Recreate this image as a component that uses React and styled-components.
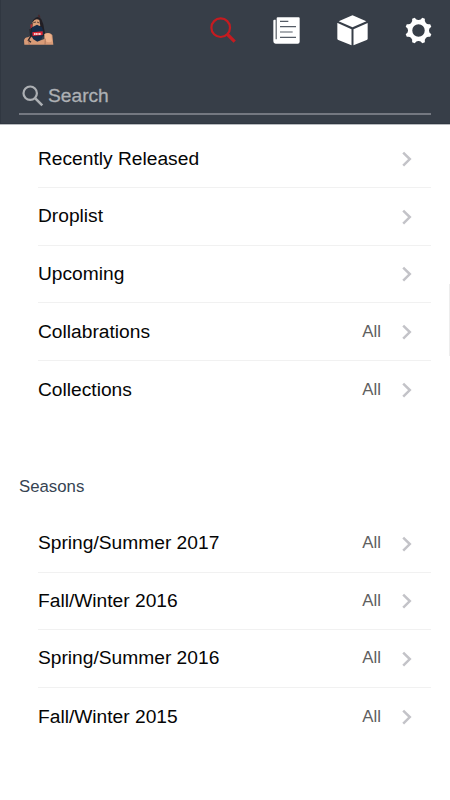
import React from 'react';
import styled, { createGlobalStyle } from 'styled-components';

const browseItems = [
  { label: 'Recently Released' },
  { label: 'Droplist' },
  { label: 'Upcoming' },
  { label: 'Collabrations', note: 'All' },
  { label: 'Collections', note: 'All' },
];

const seasonItems = [
  { label: 'Spring/Summer 2017', note: 'All' },
  { label: 'Fall/Winter 2016', note: 'All' },
  { label: 'Spring/Summer 2016', note: 'All' },
  { label: 'Fall/Winter 2015', note: 'All' },
];

// eight narrow teeth with scooped valleys between them
const gearPath = () => {
  const point = (deg, r) => {
    const a = (deg * Math.PI) / 180;
    return `${(40 + r * Math.cos(a)).toFixed(2)} ${(40 + r * Math.sin(a)).toFixed(2)}`;
  };
  let d = `M${point(17, 39.5)}`;
  for (let i = 0; i < 8; i++) {
    const mid = 22.5 + i * 45;
    d += `L${point(mid + 6, 39.5)}Q${point(mid + 11, 31)} ${point(mid + 22.5, 31)}`;
    d += `Q${point(mid + 34, 31)} ${point(mid + 39, 39.5)}`;
  }
  return `${d}ZM58.5 40A18.5 18.5 0 1 0 21.5 40A18.5 18.5 0 1 0 58.5 40Z`;
};

const Logo = () => (
  <svg width="32" height="34" viewBox="40 22 96 102">
    <path d="M71 42Q84 27 95 41Q102 54 104 72L108 92L65 92L64 62Z" fill="#211e24" />
    <path d="M84 32L88 26L93 36Z" fill="#4a2528" />
    <path d="M44 117L43 104Q46 94 55 95L61 92L72 98L86 107L104 100L105 84Q120 78 128 88L131 117Z" fill="#d99b77" />
    <path d="M104 86Q118 78 125 88L127 107Q117 113 107 105Z" fill="#edb18b" />
    <path d="M69 50Q76 37 89 43L92 60L68 66Z" fill="#dc9f78" />
    <path d="M71 51L79 49M82 49L89 52" stroke="#392a2b" strokeWidth="2.4" fill="none" />
    <path d="M62 57L68 54L68 66L63 68Z" fill="#a92f36" />
    <path d="M67 65L82 57L97 65L103 84L95 101L83 108L70 100L65 84Z" fill="#152b48" />
    <path d="M68 80L99 77L99 88L69 91Z" fill="#df2734" />
    <path d="M73 85H94" stroke="#fff" strokeWidth="4" strokeDasharray="4 1" fill="none" />
    <path d="M61 70L63 92L56 104L64 110" stroke="#292329" strokeWidth="4" fill="none" />
    <path d="M56 104L59 117M107 99L106 117" stroke="#966350" strokeWidth="2" fill="none" />
  </svg>
);

const SearchTabIcon = () => (
  <svg width="26" height="26" viewBox="0 0 26 26" fill="none" stroke="#c51b20">
    <circle cx="10.7" cy="10.7" r="9.3" strokeWidth="2.2" />
    <path d="M17.5 17.5L24.7 24.6" strokeWidth="3.2" />
  </svg>
);

const NewsIcon = () => (
  <svg width="27" height="27" viewBox="220 36 81 81">
    <path d="M234 37H297Q300 37 300 40V110Q300 116 294 116H228Q221 116 221 109V47Q221 44 224 44H228V103H231V40Q231 37 234 37Z" fill="#fff" />
    <path d="M241 49H266M241 65H289M241 81H279M241 97H289" stroke="#555c66" strokeWidth="3.6" />
  </svg>
);

const CubeIcon = () => (
  <svg width="31" height="31" viewBox="36 30 93 93" fill="#fff">
    <path d="M82.5 31L124 49L82.5 67L41 49Z" />
    <path d="M38 54L79.5 73V121L40 105Q37 104 37 101V54Z" />
    <path d="M128 54L85.5 73V121L125 105Q128 104 128 101Z" />
  </svg>
);

const GearIcon = () => (
  <svg width="27" height="27" viewBox="0 0 80 80">
    <path d={gearPath()} fill="#fff" fillRule="evenodd" />
  </svg>
);

const SearchIcon = () => (
  <svg width="22" height="22" viewBox="0 0 22 22" fill="none" stroke="#adb0b4">
    <circle cx="8.2" cy="8.2" r="6.7" strokeWidth="2.2" />
    <path d="M13.3 13.3L20.3 20.3" strokeWidth="2.6" />
  </svg>
);

const Chevron = () => (
  <svg width="10" height="17" viewBox="0 0 10 17" fill="none" stroke="#c3c3c8" strokeWidth="2.5">
    <path d="M1.2 2.6L7.8 9.1L1.2 15.6" />
  </svg>
);

const ItemList = ({ items }) => (
  <List>
    {items.map((item) => (
      <Item key={item.label}>
        <ItemLabel>{item.label}</ItemLabel>
        {item.note && <ItemNote>{item.note}</ItemNote>}
        <Chevron />
      </Item>
    ))}
  </List>
);

const App = () => {
  return (
    <Page>
      <GlobalStyle />
      <Header>
        <TopBar>
          <TabButton $width={32}><Logo /></TabButton>
          <Tabs>
            <TabButton $width={26}><SearchTabIcon /></TabButton>
            <TabButton $width={27}><NewsIcon /></TabButton>
            <TabButton $width={31}><CubeIcon /></TabButton>
            <TabButton $width={27}><GearIcon /></TabButton>
          </Tabs>
        </TopBar>
        <SearchField>
          <SearchIcon />
          <SearchInput placeholder="Search" />
        </SearchField>
      </Header>
      <ItemList items={browseItems} />
      <SectionTitle>Seasons</SectionTitle>
      <ItemList items={seasonItems} />
      <DrawerEdge />
    </Page>
  );
};

const GlobalStyle = createGlobalStyle`
  body {
    margin: 0;
    background-color: white;
    font-family: 'Liberation Sans', Arial, sans-serif;
  }
`

const Page = styled.div`
  position: relative;
  width: 450px;
  height: 800px;
  overflow: hidden;
  background-color: white;
`

const Header = styled.header`
  height: 125px;
  box-sizing: border-box;
  background-color: #373e48;
  border-bottom: 1px solid #b8bbbf;
  box-shadow: inset 1px -1px 0 #303741;
`

const TopBar = styled.div`
  display: flex;
  justify-content: space-between;
  align-items: center;
  height: 60px;
  padding: 0 18px 0 23px;
`

const Tabs = styled.nav`
  display: flex;
  align-items: center;
  gap: 37px;
`

const TabButton = styled.button`
  display: flex;
  width: ${(props) => props.$width}px;
  padding: 0;
  border: none;
  background: transparent;
  cursor: pointer;
`

const SearchField = styled.label`
  display: flex;
  align-items: center;
  height: 39px;
  margin: 16px 19px 0;
  padding: 3px 0 0 3px;
  box-sizing: border-box;
  border-bottom: 2px solid #747881;
`

const SearchInput = styled.input`
  flex: 1;
  min-width: 0;
  margin-left: 4px;
  padding: 0;
  border: none;
  outline: none;
  background: transparent;
  color: #adb0b4;
  font: 19.2px 'Liberation Sans', Arial, sans-serif;
  -webkit-text-stroke: 0.3px #adb0b4;
  &::placeholder {
    color: #adb0b4;
    opacity: 1;
  }
`

const List = styled.ul`
  margin: 0;
  padding: 5.5px 19px 0 38px;
  list-style: none;
`

const Item = styled.li`
  display: flex;
  align-items: center;
  height: 57.6px;
  padding-right: 19px;
  box-sizing: border-box;
  border-bottom: 1px solid #f1f1f1;
  cursor: pointer;
  &:last-child {
    border-bottom: none;
  }
`

const ItemLabel = styled.span`
  flex: 1;
  color: #050505;
  font-size: 19.2px;
`

const ItemNote = styled.span`
  margin-right: 21px;
  color: #606060;
  font-size: 16.8px;
`

const SectionTitle = styled.h2`
  margin: 0;
  padding: 58.5px 19px 12.5px;
  color: #364452;
  font-size: 16.8px;
  line-height: 20px;
  font-weight: 400;
`

const DrawerEdge = styled.div`
  position: absolute;
  top: 284px;
  right: 0;
  width: 1px;
  height: 72px;
  background-color: #ededed;
`

export default App
